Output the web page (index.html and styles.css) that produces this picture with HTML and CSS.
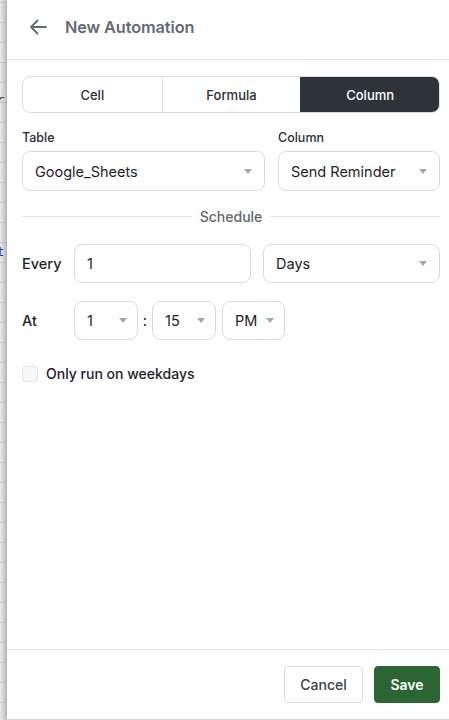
FILE: index.html
```html
<!DOCTYPE html>
<html lang="en">
<head>
<meta charset="utf-8">
<title>New Automation</title>
<link rel="stylesheet" href="styles.css">
</head>
<body>
<div class="strip">
  <span class="frag frag-r">r</span>
  <span class="frag frag-t">t</span>
</div>
<div class="panel">
  <div class="header">
    <svg class="back" width="18" height="16" viewBox="0 0 18 16" fill="none" stroke="currentColor" stroke-width="1.8" stroke-linecap="round" stroke-linejoin="round"><path d="M17 8H2M8.5 1.5 2 8l6.5 6.5"/></svg>
    <div class="title">New Automation</div>
  </div>
  <div class="content">
    <div class="tabs">
      <div class="tab">Cell</div>
      <div class="tab">Formula</div>
      <div class="tab active">Column</div>
    </div>

    <div class="pair">
      <div class="field">
        <div class="label">Table</div>
        <div class="select big"><span>Google_Sheets</span><i class="caret"></i></div>
      </div>
      <div class="field">
        <div class="label">Column</div>
        <div class="select big"><span>Send Reminder</span><i class="caret"></i></div>
      </div>
    </div>

    <div class="divider"><span>Schedule</span></div>

    <div class="row">
      <div class="row-label">Every</div>
      <div class="input grow">1</div>
      <div class="select grow"><span>Days</span><i class="caret"></i></div>
    </div>

    <div class="row at">
      <div class="row-label">At</div>
      <div class="select small"><span>1</span><i class="caret"></i></div>
      <div class="colon">:</div>
      <div class="select small"><span>15</span><i class="caret"></i></div>
      <div class="select small pm"><span>PM</span><i class="caret"></i></div>
    </div>

    <label class="check">
      <span class="box"></span>
      <span>Only run on weekdays</span>
    </label>
  </div>
  <div class="footer">
    <button class="btn cancel">Cancel</button>
    <button class="btn save">Save</button>
  </div>
</div>
</body>
</html>
```

FILE: styles.css
```css
* { box-sizing: border-box; }
html, body { margin: 0; padding: 0; }
body {
  display: flex;
  width: 449px;
  height: 720px;
  overflow: hidden;
  font-family: Inter, "Noto Sans", sans-serif;
  color: #1f2329;
  background: #ececec;
}
.strip {
  position: relative;
  width: 7px;
  flex: none;
  background:
    repeating-linear-gradient(to bottom, transparent 0 19px, #c9c9c9 19px 20px),
    linear-gradient(to right, #e9e9e9, #d2d2d2);
  background-position: 0 3px, 0 0;
}
.frag {
  position: absolute;
  font-family: "DejaVu Sans Mono", monospace;
  font-size: 12px;
  line-height: 1;
}
.frag-r { top: 94px; left: -3px; color: #444; font-style: italic; }
.frag-t { top: 246px; left: -3px; color: #2233dd; }
.panel {
  position: relative;
  flex: 1;
  background: #fff;
  display: flex;
  flex-direction: column;
  box-shadow: -2px 0 5px rgba(0,0,0,0.18);
  border-bottom: 1px solid #dcdcdc;
}
.header {
  height: 60px;
  flex: none;
  display: flex;
  align-items: center;
  gap: 18px;
  padding-left: 22px;
  padding-bottom: 5px;
  border-bottom: 1px solid #e6e7ea;
  color: #646a73;
}
.back { display: block; }
.title {
  font-size: 16.3px;
  font-weight: 600;
  letter-spacing: -0.1px;
}
.content {
  flex: 1;
  padding: 16px 9px 0 15px;
  display: flex;
  flex-direction: column;
}
.tabs {
  display: grid;
  grid-template-columns: 1fr 1fr 1fr;
  height: 37px;
  border: 1px solid #dcdee2;
  border-radius: 8px;
  overflow: hidden;
}
.tab {
  display: flex;
  align-items: center;
  justify-content: center;
  font-size: 13px;
  font-weight: 500;
  color: #2a2e35;
}
.tab + .tab { border-left: 1px solid #dcdee2; }
.tab.active {
  background: #2e3239;
  color: #fff;
  border-left-color: #2e3239;
}
.pair {
  display: grid;
  grid-template-columns: 243px 1fr;
  gap: 13px;
  margin-top: 17px;
}
.label {
  font-size: 12.5px;
  font-weight: 500;
  color: #2a2e35;
  height: 15px;
  line-height: 15px;
  margin-bottom: 6px;
}
.select, .input {
  display: flex;
  align-items: center;
  justify-content: space-between;
  height: 39px;
  border: 1px solid #d9dce0;
  border-radius: 8px;
  padding: 0 12px 0 12px;
  font-size: 14.5px;
  color: #1f2329;
}
.select.big { height: 40px; }
.caret {
  width: 0;
  height: 0;
  border-left: 4px solid transparent;
  border-right: 4px solid transparent;
  border-top: 5px solid #a3a7ad;
  flex: none;
}
.divider {
  display: flex;
  align-items: center;
  gap: 8px;
  margin-top: 18px;
  font-size: 14px;
  font-weight: 500;
  color: #5f6570;
  height: 14px;
}
.divider::before, .divider::after {
  content: "";
  flex: 1;
  height: 1px;
  background: #e1e3e6;
}
.row {
  display: flex;
  align-items: center;
  margin-top: 21px;
}
.row-label {
  width: 52px;
  flex: none;
  font-size: 14.5px;
  font-weight: 500;
  color: #1f2329;
}
.grow { flex: 1; }
.row .input.grow { margin-right: 12px; }
.row.at { margin-top: 18px; }
.select.small {
  width: 64px;
  flex: none;
  padding: 0 10px 0 12px;
}
.select.pm { width: 63px; margin-left: 6px; }
.colon {
  width: 14px;
  text-align: center;
  font-size: 15px;
}
.check {
  display: flex;
  align-items: center;
  gap: 8px;
  margin-top: 25px;
  font-size: 14px;
  font-weight: 500;
  color: #1f2329;
}
.box {
  width: 16px;
  height: 16px;
  border: 1px solid #e3e5e8;
  background: #f5f6f8;
  border-radius: 3px;
}
.footer {
  flex: none;
  display: flex;
  justify-content: flex-end;
  gap: 11px;
  padding: 16px 9px 16px 0;
  border-top: 1px solid #e6e7ea;
}
.btn {
  height: 37px;
  border-radius: 4px;
  font-family: inherit;
  font-size: 14px;
  font-weight: 500;
  padding: 0 15px;
}
.cancel {
  width: 79px;
  background: #fff;
  border: 1px solid #d9dce0;
  color: #3a3f47;
}
.save {
  width: 66px;
  background: #2b6533;
  border: 1px solid #2b6533;
  color: #fff;
  font-weight: 600;
}
```
